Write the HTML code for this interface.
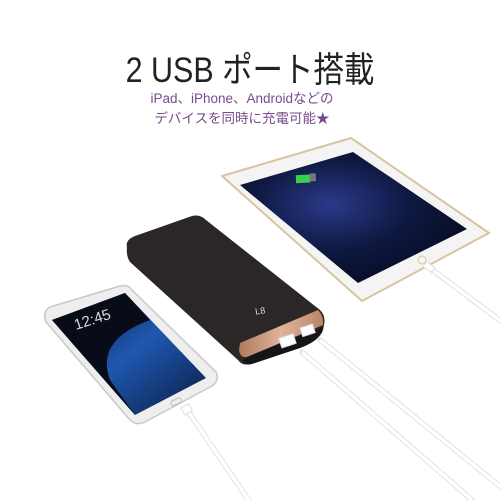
<!DOCTYPE html>
<html><head><meta charset="utf-8"><style>
html,body{margin:0;padding:0;background:#fff;width:500px;height:500px;overflow:hidden;position:relative}
.t{position:absolute;left:0;width:500px;text-align:center;font-family:"Liberation Sans","Noto Sans CJK JP",sans-serif}
</style></head><body>
<div class="t" style="top:42px;font-size:35px;color:#222;transform:scaleX(0.87);transform-origin:250px 0">2 USB ポート搭載</div>
<div class="t" style="top:89px;font-size:13.5px;color:#7a4a8c;line-height:20px;left:-8px">iPad、iPhone、Androidなどの<br>デバイスを同時に充電可能★</div>
<svg width="500" height="500" style="position:absolute;left:0;top:0">
<defs>
<radialGradient id="sp" cx="0.4" cy="0.4" r="0.7"><stop offset="0" stop-color="#2a3a8a"/><stop offset="0.5" stop-color="#0e1840"/><stop offset="1" stop-color="#060a1e"/></radialGradient>
<linearGradient id="cu" x1="0" y1="0" x2="1" y2="0"><stop offset="0" stop-color="#b07a5c"/><stop offset="0.5" stop-color="#e0b49a"/><stop offset="1" stop-color="#b8846a"/></linearGradient>
<linearGradient id="ph" x1="0" y1="0" x2="1" y2="1"><stop offset="0" stop-color="#0a0f25"/><stop offset="0.5" stop-color="#1f58b0"/><stop offset="1" stop-color="#0a1a40"/></linearGradient>
</defs>
<g stroke="#e2e2e2" stroke-width="5.5" fill="none" stroke-linecap="round">
<line x1="430" y1="268" x2="502" y2="322"/>
<line x1="302" y1="352" x2="472" y2="500"/>
<line x1="320" y1="340" x2="502" y2="488"/>
<line x1="187" y1="410" x2="250" y2="502"/>
</g>
<g stroke="#fff" stroke-width="3.5" fill="none">
<line x1="430" y1="268" x2="502" y2="322"/>
<line x1="302" y1="352" x2="472" y2="500"/>
<line x1="320" y1="340" x2="502" y2="488"/>
<line x1="187" y1="410" x2="250" y2="502"/>
</g>
<!-- iPad -->
<polygon points="222,176 351,138 489,233 362,301" fill="#f4f4f4" stroke="#d8c4a0" stroke-width="2" stroke-linejoin="round"/>
<polygon points="240,185 353,152 467,229 358,283" fill="url(#sp)"/>
<rect x="296" y="175" width="14" height="8" fill="#3ccf4e" transform="rotate(-3 300 180)"/>
<rect x="310" y="174" width="6" height="8" fill="#777" transform="rotate(-3 300 180)"/>
<circle cx="422" cy="260" r="4" fill="none" stroke="#d8c4a0" stroke-width="1"/>
<rect x="424" y="264" width="10" height="6" fill="#fff" stroke="#ddd" transform="rotate(35 429 267)"/>
<!-- power bank -->
<path d="M127,247 Q125,240 135,236 L192,216 Q200,214 206,220 L320,310 Q326,316 324,325 L323,330 Q320,340 300,348 L250,364 Q242,366 238,360 L130,262 Q126,256 127,247Z" fill="#2a2726"/>
<path d="M240,343 L318,310 Q324,316 323,325 L247,357 Q240,358 239,350Z" fill="url(#cu)"/>
<path d="M247,357 L323,327 Q322,340 300,348 L252,364 Q244,366 243,360Z" fill="#161414"/>
<text x="255" y="314" font-family="Liberation Sans,sans-serif" font-size="9" fill="#ddd" transform="rotate(-10 260 310)">L8</text>
<rect x="280" y="336" width="15" height="10" fill="#fff" stroke="#ddd" transform="rotate(-18 287 341)"/>
<rect x="301" y="326" width="13" height="9" fill="#fff" stroke="#ddd" transform="rotate(-18 307 330)"/>
<!-- phone -->
<path d="M50,307 L120,286 Q128,284 132,290 L216,372 Q220,380 212,386 L145,422 Q136,426 130,420 L46,322 Q42,312 50,307Z" fill="#eeeeee" stroke="#c8c8c8" stroke-width="1.5"/>
<path d="M52,320 L125,293 L206,378 L135,415Z" fill="url(#ph)"/>
<path d="M52,320 L125,293 L150,320 Q95,340 110,380 L135,415Z" fill="#080b18"/>
<text x="76" y="330" font-family="Liberation Sans,sans-serif" font-size="15" fill="#ddd" transform="rotate(-18 76 330)">12:45</text>
<rect x="171" y="399" width="11" height="5" rx="2" fill="none" stroke="#bbb" transform="rotate(-25 177 402)"/>
<rect x="182" y="405" width="9" height="8" fill="#fff" stroke="#ddd" transform="rotate(-30 187 409)"/>
</svg>
</body></html>
